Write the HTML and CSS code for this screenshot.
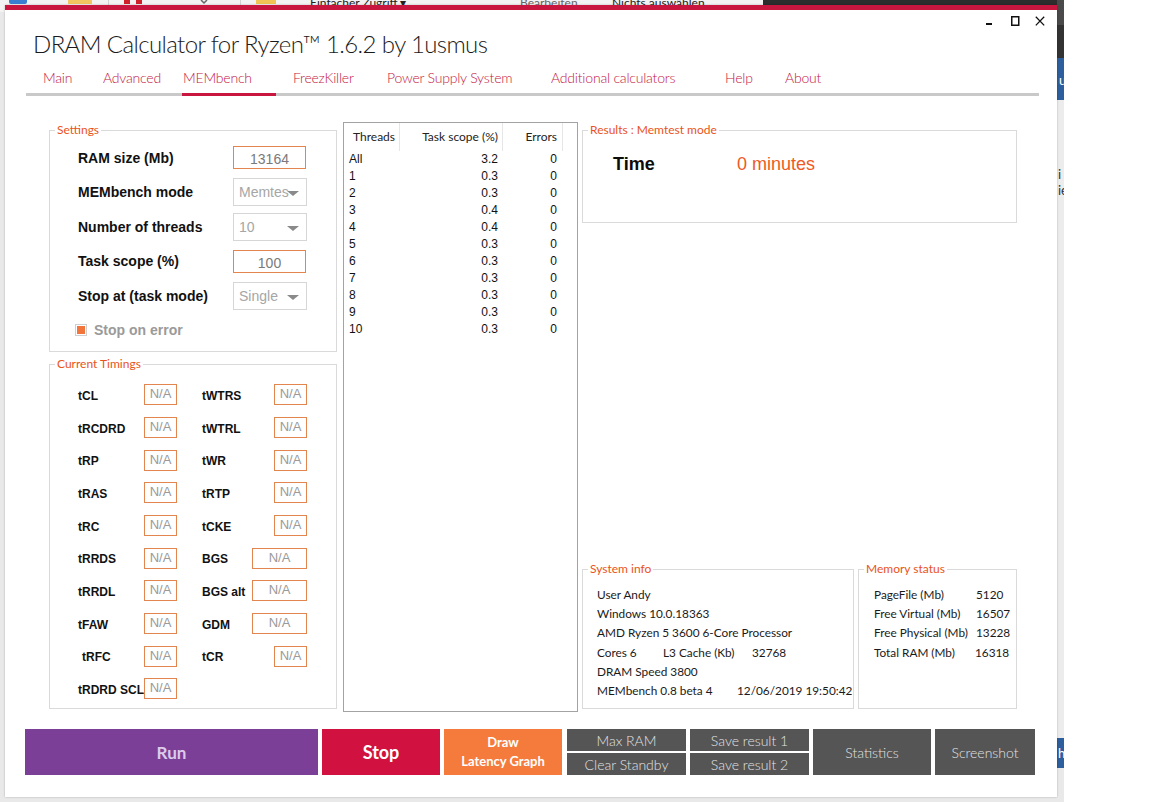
FILE: index.html
```html
<!DOCTYPE html>
<html lang="en">
<head>
<meta charset="utf-8">
<title>DRAM Calculator for Ryzen 1.6.2</title>
<link rel="stylesheet" href="styles.css">
</head>
<body>
<div class="desktop">
  <div class="explorer">
    <div class="ribbon">
      <div class="rb-light">
        <span class="rb-ico ico-blue"></span>
        <span class="rb-ico ico-yellow"></span>
        <span class="rb-sep"></span>
        <span class="rb-ico ico-red"></span>
        <svg class="rb-x" width="10" height="6" viewBox="0 0 10 6"><path d="M2 0 L5 3 L8 0" stroke="#666" stroke-width="1.5" fill="none"/></svg>
        <span class="rb-sep2"></span>
        <span class="rb-ico ico-yellow2"></span>
        <span class="rb-text rb-t1">Einfacher Zugriff ▾</span>
        <span class="rb-text rb-t2">Bearbeiten</span>
        <span class="rb-text rb-t3">Nichts auswählen</span>
      </div>
      <div class="rb-dark"></div>
    </div>
    <div class="side-right">
      <div class="sr-dark"></div>
      <div class="sr-blue"><span>u</span></div>
      <div class="sr-light"><span class="sr-t1">i</span><span class="sr-t2">ie</span></div>
      <div class="sr-blue2"><span>h</span></div>
    </div>
  </div>

  <div class="window">
    <div class="controls">
      <svg class="ctl ctl-min" width="10" height="10" viewBox="0 0 10 10"><rect x="3" y="7" width="6" height="2" fill="#111"/></svg>
      <svg class="ctl ctl-max" width="10" height="10" viewBox="0 0 10 10"><rect x="1.75" y="0.75" width="7" height="8.5" fill="none" stroke="#111" stroke-width="1.5"/></svg>
      <svg class="ctl ctl-close" width="10" height="10" viewBox="0 0 10 10"><path d="M0.8 0.8 L9.2 9.4 M9.2 0.8 L0.8 9.4" stroke="#111" stroke-width="1.3" fill="none"/></svg>
    </div>
    <h1 class="title">DRAM Calculator for Ryzen™ 1.6.2 by 1usmus</h1>
    <nav class="tabs">
      <span class="tab w-main">Main</span>
      <span class="tab w-adv">Advanced</span>
      <span class="tab w-mem">MEMbench</span>
      <span class="tab w-freez">FreezKiller</span>
      <span class="tab w-pss">Power Supply System</span>
      <span class="tab w-add">Additional calculators</span>
      <span class="tab w-help">Help</span>
      <span class="tab">About</span>
    </nav>
    <div class="tabbar"><div class="tabbar-active"></div></div>

    <div class="main">
      <div class="col-left">
        <fieldset class="group settings">
          <legend>Settings</legend>
          <div class="srow tall"><span class="slabel">RAM size (Mb)</span><span class="tbox">13164</span></div>
          <div class="srow"><span class="slabel">MEMbench mode</span><span class="combo"><span class="combo-text">Memtes</span><span class="caret"></span></span></div>
          <div class="srow tall"><span class="slabel">Number of threads</span><span class="combo"><span class="combo-text">10</span><span class="caret"></span></span></div>
          <div class="srow"><span class="slabel">Task scope (%)</span><span class="tbox">100</span></div>
          <div class="srow tall"><span class="slabel">Stop at (task mode)</span><span class="combo"><span class="combo-text">Single</span><span class="caret"></span></span></div>
          <div class="srow check-row"><span class="check"><span class="check-fill"></span></span><span class="check-label">Stop on error</span></div>
        </fieldset>

        <fieldset class="group timings">
          <legend>Current Timings</legend>
          <div class="trow tall"><div class="tcell"><span class="tlabel">tCL</span><span class="nbox">N/A</span></div><div class="tcell tright"><span class="tlabel">tWTRS</span><span class="nbox">N/A</span></div></div>
          <div class="trow tall"><div class="tcell"><span class="tlabel">tRCDRD</span><span class="nbox">N/A</span></div><div class="tcell tright"><span class="tlabel">tWTRL</span><span class="nbox">N/A</span></div></div>
          <div class="trow"><div class="tcell"><span class="tlabel">tRP</span><span class="nbox">N/A</span></div><div class="tcell tright"><span class="tlabel">tWR</span><span class="nbox">N/A</span></div></div>
          <div class="trow tall"><div class="tcell"><span class="tlabel">tRAS</span><span class="nbox">N/A</span></div><div class="tcell tright"><span class="tlabel">tRTP</span><span class="nbox">N/A</span></div></div>
          <div class="trow tall"><div class="tcell"><span class="tlabel">tRC</span><span class="nbox">N/A</span></div><div class="tcell tright"><span class="tlabel">tCKE</span><span class="nbox">N/A</span></div></div>
          <div class="trow"><div class="tcell"><span class="tlabel">tRRDS</span><span class="nbox">N/A</span></div><div class="tcell tright"><span class="tlabel">BGS</span><span class="nbox wide">N/A</span></div></div>
          <div class="trow tall"><div class="tcell"><span class="tlabel">tRRDL</span><span class="nbox">N/A</span></div><div class="tcell tright"><span class="tlabel">BGS alt</span><span class="nbox wide">N/A</span></div></div>
          <div class="trow tall"><div class="tcell"><span class="tlabel">tFAW</span><span class="nbox">N/A</span></div><div class="tcell tright"><span class="tlabel">GDM</span><span class="nbox wide">N/A</span></div></div>
          <div class="trow"><div class="tcell"><span class="tlabel indent">tRFC</span><span class="nbox">N/A</span></div><div class="tcell tright"><span class="tlabel">tCR</span><span class="nbox">N/A</span></div></div>
          <div class="trow tall"><div class="tcell"><span class="tlabel">tRDRD SCL</span><span class="nbox">N/A</span></div></div>
        </fieldset>
      </div>

      <div class="listview">
        <div class="lv-head"><span class="c1">Threads</span><span class="c2">Task scope (%)</span><span class="c3">Errors</span></div>
        <div class="lv-row"><span class="c1">All</span><span class="c2">3.2</span><span class="c3">0</span></div>
        <div class="lv-row"><span class="c1">1</span><span class="c2">0.3</span><span class="c3">0</span></div>
        <div class="lv-row"><span class="c1">2</span><span class="c2">0.3</span><span class="c3">0</span></div>
        <div class="lv-row"><span class="c1">3</span><span class="c2">0.4</span><span class="c3">0</span></div>
        <div class="lv-row"><span class="c1">4</span><span class="c2">0.4</span><span class="c3">0</span></div>
        <div class="lv-row"><span class="c1">5</span><span class="c2">0.3</span><span class="c3">0</span></div>
        <div class="lv-row"><span class="c1">6</span><span class="c2">0.3</span><span class="c3">0</span></div>
        <div class="lv-row"><span class="c1">7</span><span class="c2">0.3</span><span class="c3">0</span></div>
        <div class="lv-row"><span class="c1">8</span><span class="c2">0.3</span><span class="c3">0</span></div>
        <div class="lv-row"><span class="c1">9</span><span class="c2">0.3</span><span class="c3">0</span></div>
        <div class="lv-row"><span class="c1">10</span><span class="c2">0.3</span><span class="c3">0</span></div>
      </div>

      <div class="col-right">
        <fieldset class="group results">
          <legend>Results : Memtest mode</legend>
          <div class="res-row"><span class="res-label">Time</span><span class="res-value">0 minutes</span></div>
        </fieldset>
        <div class="info-row">
          <fieldset class="group sysinfo">
            <legend>System info</legend>
            <div class="iline">User Andy</div>
            <div class="iline">Windows 10.0.18363</div>
            <div class="iline">AMD Ryzen 5 3600 6-Core Processor</div>
            <div class="iline"><span class="s-cores">Cores 6</span><span class="s-l3">L3 Cache (Kb)</span><span>32768</span></div>
            <div class="iline">DRAM Speed 3800</div>
            <div class="iline"><span class="s-bench">MEMbench 0.8 beta 4</span><span>12/06/2019 19:50:42</span></div>
          </fieldset>
          <fieldset class="group memstatus">
            <legend>Memory status</legend>
            <div class="iline"><span class="m-label">PageFile (Mb)</span><span>5120</span></div>
            <div class="iline"><span class="m-label">Free Virtual (Mb)</span><span>16507</span></div>
            <div class="iline"><span class="m-label">Free Physical (Mb)</span><span>13228</span></div>
            <div class="iline"><span class="m-label">Total RAM (Mb)</span><span class="m-shift">16318</span></div>
          </fieldset>
        </div>
      </div>
    </div>

    <div class="buttons">
      <div class="btn btn-run">Run</div>
      <div class="btn btn-stop">Stop</div>
      <div class="btn btn-draw">Draw<br>Latency Graph</div>
      <div class="btn-stack">
        <div class="btn btn-gray btn-half">Max RAM</div>
        <div class="btn btn-gray btn-half">Clear Standby</div>
      </div>
      <div class="btn-stack">
        <div class="btn btn-gray btn-half">Save result 1</div>
        <div class="btn btn-gray btn-half">Save result 2</div>
      </div>
      <div class="btn btn-gray btn-stats">Statistics</div>
      <div class="btn btn-gray btn-shot">Screenshot</div>
    </div>
  </div>
</div>
</body>
</html>
```

FILE: styles.css
```css
* { box-sizing: border-box; }
html, body { margin: 0; padding: 0; }
body {
  width: 1152px;
  height: 802px;
  overflow: hidden;
  background: #ffffff;
  font-family: "Liberation Sans", Arial, sans-serif;
  color: #111;
}
.desktop {
  position: relative;
  width: 1152px;
  height: 802px;
  overflow: hidden;
  background: #ffffff;
}

/* ---------- background explorer window ---------- */
.explorer {
  position: absolute;
  left: 0;
  top: 0;
  width: 1064px;
  height: 802px;
  background: #e9e9e9;
}
.ribbon { display: flex; height: 12px; }
.rb-light {
  position: relative;
  width: 763px;
  height: 12px;
  background: #f3f3f3;
  overflow: hidden;
}
.rb-dark { flex: 1; background: #2d2d2d; }
.rb-ico { position: absolute; top: -6px; width: 18px; height: 10px; }
.ico-blue { left: 9px; background: #3b7fd0; border-radius: 2px; }
.ico-yellow { left: 68px; width: 24px; background: #f2c660; }
.ico-red { left: 124px; width: 22px; background: linear-gradient(90deg, #d0202a 0 6px, transparent 6px 12px, #d0202a 12px 18px, transparent 18px); }
.ico-yellow2 { left: 256px; width: 20px; background: #f0c555; }
.rb-sep { position: absolute; left: 108px; top: 0; width: 1px; height: 12px; background: #d2d2d2; }
.rb-sep2 { position: absolute; left: 240px; top: 0; width: 1px; height: 12px; background: #d2d2d2; }
.rb-x { position: absolute; left: 199px; top: 0; }
.rb-text { position: absolute; top: -3px; font-size: 12px; line-height: 12px; color: #222; font-family: "Lato", sans-serif; }
.rb-t1 { left: 310px; }
.rb-t2 { left: 520px; color: #666; }
.rb-t3 { left: 612px; }

.side-right {
  position: absolute;
  left: 1057px;
  top: 0;
  width: 7px;
  height: 802px;
  display: flex;
  flex-direction: column;
  overflow: hidden;
  font-family: "Lato", sans-serif;
  font-size: 13px;
}
.sr-dark { height: 58px; background: linear-gradient(#4a4a4a 0 25px, #333 25px); }
.sr-blue { height: 42px; background: #2d5f9e; color: #fff; padding-left: 2px; line-height: 44px; }
.sr-light { height: 638px; background: #ececec; color: #333; position: relative; padding-left: 1px; }
.sr-t1 { display: block; margin-top: 66px; }
.sr-t2 { display: block; }
.sr-blue2 { height: 30px; background: #2d5f9e; color: #fff; line-height: 30px; padding-left: 1px; }

/* ---------- app window ---------- */
.window {
  position: absolute;
  left: 5px;
  top: 5px;
  width: 1052px;
  height: 792px;
  background: #ffffff;
  border-top: 5px solid #c8163e;
  box-shadow: 0 0 2px rgba(0, 0, 0, 0.25);
}
.controls {
  display: flex;
  justify-content: flex-end;
  align-items: flex-start;
  height: 19px;
  padding-top: 6px;
  padding-right: 12px;
}
.ctl { display: block; }
.ctl-min { margin-right: 17px; }
.ctl-max { margin-right: 15px; }

.title {
  margin: 0 0 0 28px;
  font-family: "Lato", sans-serif;
  font-weight: 300;
  font-size: 24px;
  letter-spacing: -0.6px;
  line-height: 30px;
  color: #1b1b1b;
  white-space: nowrap;
}

.tabs {
  display: flex;
  margin-top: 4px;
  height: 30px;
  padding-left: 38px;
  font-family: "Lato", sans-serif;
  font-weight: 300;
  font-size: 14px;
  letter-spacing: -0.2px;
  line-height: 30px;
  color: #c4153f;
  white-space: nowrap;
}
.w-main { width: 60px; }
.w-adv { width: 80px; }
.w-mem { width: 110px; }
.w-freez { width: 94px; }
.w-pss { width: 164px; }
.w-add { width: 174px; }
.w-help { width: 60px; }

.tabbar {
  margin-left: 21px;
  width: 1013px;
  height: 3px;
  background: #c9c9c9;
}
.tabbar-active {
  margin-left: 156px;
  width: 94px;
  height: 3px;
  background: #c8163e;
}

.main {
  display: flex;
  align-items: flex-start;
  margin-top: 26px;
  height: 590px;
  padding-left: 44px;
}

/* group boxes */
.group {
  margin: 0;
  padding: 0;
  border: 1px solid #dadada;
  min-width: 0;
}
.group legend {
  margin-left: 5px;
  padding: 0 2px;
  font-family: "Lato", sans-serif;
  font-size: 12px;
  line-height: 14px;
  color: #ea5320;
}

.col-left { width: 288px; }
.settings { margin-top: 1px; height: 229px; padding-top: 3px; }
.srow {
  display: flex;
  align-items: center;
  height: 34px;
  padding-left: 28px;
}
.srow.tall { height: 35px; }
.slabel {
  width: 155px;
  font-weight: bold;
  font-size: 14px;
  color: #111;
  white-space: nowrap;
}
.tbox {
  width: 73px;
  height: 23px;
  border: 1px solid #e3854f;
  text-align: center;
  font-size: 14px;
  line-height: 22px;
  color: #7a7a7a;
  padding-top: 1px;
}
.combo {
  position: relative;
  width: 74px;
  height: 28px;
  border: 1px solid #d6d6d6;
  display: flex;
  align-items: center;
  padding-left: 5px;
  font-size: 14px;
  color: #a6a6a6;
}
.combo-text { width: 50px; overflow: hidden; white-space: nowrap; }
.caret {
  position: absolute;
  right: 7px;
  top: 12px;
  width: 0;
  height: 0;
  border-left: 6px solid transparent;
  border-right: 6px solid transparent;
  border-top: 5px solid #8a8a8a;
}
.check-row { padding-left: 25px; }
.check {
  width: 12px;
  height: 12px;
  border: 1px solid #cfcfcf;
  padding: 1px;
  margin-right: 7px;
}
.check-fill { display: block; width: 8px; height: 8px; background: #f2763c; }
.check-label { font-weight: bold; font-size: 14px; color: #9a9a9a; }

.timings { margin-top: 5px; height: 352px; padding-top: 7px; }
.trow {
  display: flex;
  align-items: center;
  height: 32px;
  padding-left: 28px;
}
.trow.tall { height: 33px; }
.tcell { display: flex; align-items: center; width: 124px; }
.tright { width: 105px; }
.tright .nbox { margin-left: auto; }
.tlabel {
  width: 66px;
  flex-shrink: 0;
  font-weight: bold;
  font-size: 12px;
  color: #111;
  white-space: nowrap;
  padding-top: 2px;
}
.tright .tlabel { width: auto; }
.indent { padding-left: 4px; }
.nbox {
  width: 33px;
  height: 21px;
  flex-shrink: 0;
  border: 1px solid #e3854f;
  text-align: center;
  font-size: 13px;
  line-height: 17px;
  color: #9a9a9a;
}
.nbox.wide { width: 55px; }

/* list view */
.listview {
  margin-left: 6px;
  width: 235px;
  height: 590px;
  border: 1px solid #a3a3a3;
}
.lv-head, .lv-row {
  display: grid;
  grid-template-columns: 56px 103px 60px;
}
.lv-head {
  height: 28px;
  line-height: 28px;
  font-family: "Lato", sans-serif;
  font-size: 12px;
  color: #222;
}
.lv-head span { border-right: 1px solid #e6e6e6; }
.lv-head .c1 { padding-left: 9px; }
.lv-head .c2 { text-align: right; padding-right: 4px; }
.lv-head .c3 { text-align: right; padding-right: 5px; }
.lv-row {
  height: 17px;
  line-height: 17px;
  font-size: 12px;
  color: #111;
}
.lv-row .c1 { padding-left: 5px; }
.lv-row .c2 { text-align: right; padding-right: 5px; }
.lv-row .c3 { text-align: right; padding-right: 6px; }

/* right column */
.col-right { margin-left: 4px; width: 435px; }
.results { margin-top: 1px; height: 100px; padding-top: 13px; }
.res-row { display: flex; align-items: center; height: 28px; padding-left: 30px; }
.res-label { width: 124px; font-weight: bold; font-size: 18px; color: #0c0c0c; }
.res-value { font-size: 18px; color: #ee5a24; }

.info-row { display: flex; margin-top: 339px; }
.sysinfo { width: 272px; height: 147px; padding-top: 9px; }
.memstatus { margin-left: 4px; width: 159px; height: 147px; padding-top: 9px; }
.iline {
  display: flex;
  height: 19.2px;
  line-height: 19.2px;
  font-family: "Lato", sans-serif;
  font-size: 11.8px;
  color: #1a1a1a;
  white-space: nowrap;
}
.sysinfo .iline { margin-left: 14px; }
.memstatus .iline { margin-left: 15px; }
.s-cores { width: 66px; }
.s-l3 { width: 89px; }
.s-bench { width: 140px; }
.m-label { width: 102px; }
.m-shift { margin-left: -1px; }

/* buttons */
.buttons {
  display: flex;
  margin-top: 17px;
  padding-left: 20px;
  height: 46px;
}
.btn {
  display: flex;
  align-items: center;
  justify-content: center;
  text-align: center;
  height: 46px;
  font-family: "Lato", sans-serif;
  white-space: nowrap;
}
.btn-run {
  width: 293px;
  background: #7b3f98;
  color: #dccbea;
  font-weight: bold;
  font-size: 17px;
}
.btn-stop {
  width: 118px;
  margin-left: 4px;
  background: #d1113f;
  color: #ffffff;
  font-weight: bold;
  font-size: 18px;
}
.btn-draw {
  width: 118px;
  margin-left: 4px;
  background: #f47b3b;
  color: #ffffff;
  font-weight: bold;
  font-size: 13px;
  line-height: 19px;
}
.btn-stack {
  display: flex;
  flex-direction: column;
  justify-content: space-between;
  width: 119px;
  height: 46px;
  margin-left: 5px;
}
.btn-stack + .btn-stack { margin-left: 4px; }
.btn-gray { background: #555555; color: #e2e2e2; font-size: 14px; font-weight: 300; }
.btn-half { height: 22px; }
.btn-stats { width: 118px; margin-left: 4px; }
.btn-shot { width: 100px; margin-left: 4px; }
```
